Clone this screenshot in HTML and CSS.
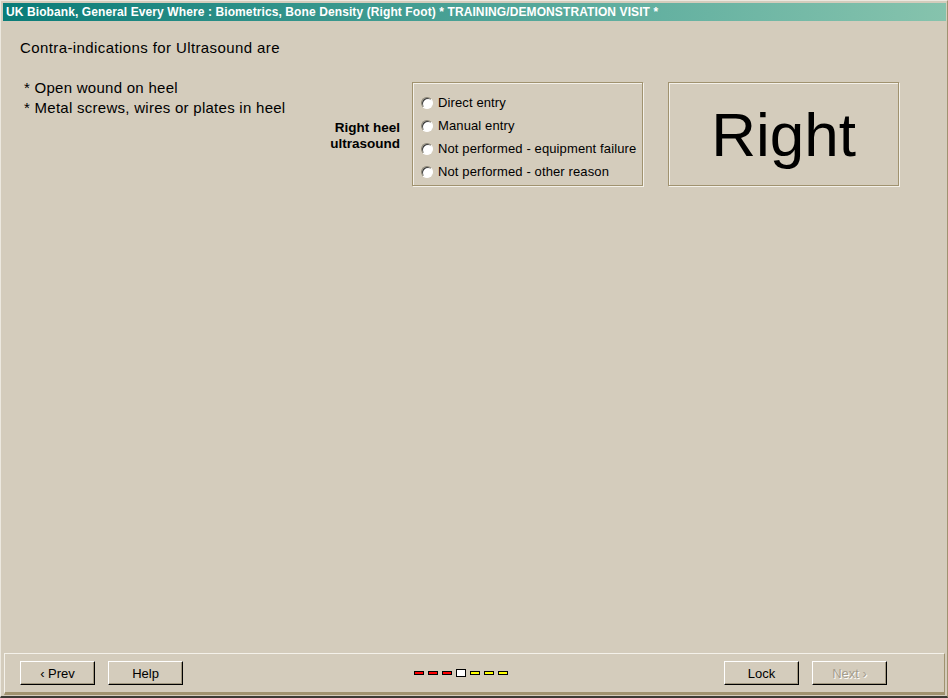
FILE: index.html
```html
<!DOCTYPE html>
<html lang="en">
<head>
  <meta charset="UTF-8" />
  <title>UK Biobank - Bone Density (Right Foot)</title>
  <link rel="stylesheet" href="styles.css">
</head>
<body>
  <div class="window">
    <div class="titlebar">UK Biobank, General Every Where : Biometrics, Bone Density (Right Foot) * TRAINING/DEMONSTRATION VISIT *</div>

    <div class="content">
      <p class="heading">Contra-indications for Ultrasound are</p>
      <div class="row">
        <div class="notes">
          <p>* Open wound on heel</p>
          <p>* Metal screws, wires or plates in heel</p>
        </div>
        <div class="label">Right heel<br>ultrasound</div>
        <div class="group">
          <label class="option"><span class="radio"></span>Direct entry</label>
          <label class="option"><span class="radio"></span>Manual entry</label>
          <label class="option"><span class="radio"></span>Not performed - equipment failure</label>
          <label class="option"><span class="radio"></span>Not performed - other reason</label>
        </div>
        <div class="side">Right</div>
      </div>
    </div>

    <div class="footer">
      <button class="btn">&lsaquo; Prev</button>
      <button class="btn">Help</button>
      <div class="progress">
        <span class="step done"></span>
        <span class="step done"></span>
        <span class="step done"></span>
        <span class="step current"></span>
        <span class="step todo"></span>
        <span class="step todo"></span>
        <span class="step todo"></span>
      </div>
      <div class="right-btns">
        <button class="btn">Lock</button>
        <button class="btn disabled">Next &rsaquo;</button>
      </div>
    </div>
  </div>
</body>
</html>
```

FILE: styles.css
```css
body {
  margin: 0;
  font-family: "Liberation Sans", Arial, sans-serif;
  background: #d4ccbc;
}
.window {
  width: 948px;
  height: 698px;
  box-sizing: border-box;
  display: flex;
  flex-direction: column;
  background: #d4ccbc;
  border-style: solid;
  border-width: 1px 1px 2px 1px;
  border-color: #ece8df #a0926f #3c3a34 #ece8df;
}
.titlebar {
  margin: 2px 1px 0 2px;
  height: 18px;
  line-height: 18px;
  padding-left: 3px;
  color: #fff;
  font-weight: bold;
  font-size: 12px;
  letter-spacing: 0.1px;
  white-space: nowrap;
  overflow: hidden;
  background: linear-gradient(to right, #0a7c78, #5fae9f 65%, #86c3ad);
}
.content {
  flex: 1;
  padding: 17px 0 0 19px;
}
.heading {
  margin: 0 0 20px;
  font-size: 15px;
  letter-spacing: 0.4px;
  line-height: 20px;
}
.row {
  display: flex;
  align-items: flex-start;
}
.notes {
  width: 296px;
  padding-left: 4px;
  font-size: 15px;
  letter-spacing: 0.27px;
  line-height: 20px;
}
.notes p {
  margin: 0;
}
.label {
  width: 80px;
  margin: 42px 12px 0 0;
  text-align: right;
  font-weight: bold;
  font-size: 13.5px;
  line-height: 16px;
}
.group, .side {
  box-sizing: border-box;
  width: 231px;
  height: 104px;
  margin-top: 4px;
  border: 1px solid #a0926f;
  box-shadow: 1px 1px 0 #f4f1ea, inset 1px 1px 0 #f4f1ea;
}
.group {
  padding: 8px 0 0 8px;
}
.option {
  display: flex;
  align-items: center;
  height: 23px;
  font-size: 13px;
  letter-spacing: 0.12px;
}
.radio {
  box-sizing: border-box;
  width: 12px;
  height: 12px;
  margin-right: 5px;
  border-radius: 50%;
  background: #fff;
  border: 1px solid;
  border-color: #8a8474 #fff #fff #8a8474;
  box-shadow: inset 1px 1px 0 #3a3a3a;
}
.side {
  margin-left: 25px;
  display: flex;
  align-items: center;
  justify-content: center;
  font-size: 62px;
}
.footer {
  box-sizing: border-box;
  height: 42px;
  margin: 0 2px 1px 3px;
  padding: 7px 0 0 15px;
  display: flex;
  align-items: flex-start;
  border-style: solid;
  border-width: 1px 1px 3px 1px;
  border-color: #f4f1ea #a0926f #a0926f #f4f1ea;
}
.btn {
  box-sizing: border-box;
  width: 75px;
  height: 24px;
  margin-right: 13px;
  padding: 0;
  font-family: "Liberation Sans", Arial, sans-serif;
  font-size: 13px;
  color: #000;
  background: #d4ccbc;
  border: 1px solid;
  border-color: #fff #000 #000 #fff;
  box-shadow: inset -1px -1px 0 #a0967f;
}
.btn.disabled {
  color: #a59d8c;
  text-shadow: 1px 1px 0 #fff;
}
.progress {
  display: flex;
  align-items: center;
  gap: 4px;
  height: 24px;
  margin-left: 218px;
}
.step {
  box-sizing: border-box;
  width: 10px;
  height: 4px;
  border: 1px solid #000;
}
.step.done { background: #ff0000; }
.step.todo { background: #ffff00; }
.step.current {
  height: 8px;
  background: #fff;
}
.right-btns {
  margin-left: auto;
  padding-right: 57px;
  display: flex;
}
.right-btns .btn:last-child {
  margin-right: 0;
}
```
